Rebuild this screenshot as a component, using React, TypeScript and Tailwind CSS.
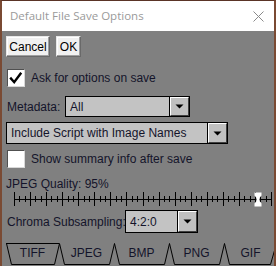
import React from "react";

const body = { fontFamily: '"Liberation Sans", Arial, sans-serif' };

function DropBtn() {
  return (
    <div className="flex h-full w-[20px] shrink-0 items-center justify-center border-l border-black">
      <div className="flex h-full w-full items-center justify-center border-t border-l border-t-white border-l-white border-b border-r border-b-[#404040] border-r-[#404040] bg-[#c0c0c0]">
        <svg width="9" height="5" viewBox="0 0 9 5">
          <path d="M0.5 0.5H8.5L4.5 4.5Z" fill="#000" />
        </svg>
      </div>
    </div>
  );
}

function CheckBox({ checked }: { checked: boolean }) {
  return (
    <div className="flex h-[18px] w-[18px] shrink-0 items-center justify-center border-t border-l border-t-[#505050] border-l-[#505050] border-b border-r border-b-[#d8d8d8] border-r-[#d8d8d8] bg-white">
      {checked && (
        <svg width="16" height="16" viewBox="0 0 16 16">
          <path d="M3 8.5 L6.2 12.2 L12.5 3.8" fill="none" stroke="#000" strokeWidth="2.4" strokeLinecap="square" />
        </svg>
      )}
    </div>
  );
}

function Btn({ label, className }: { label: string; className: string }) {
  return (
    <div
      className={
        "flex h-[21px] shrink-0 items-center justify-center whitespace-nowrap border-t border-l border-t-[#e8e8e8] border-l-[#e8e8e8] border-b border-r border-b-[#696969] border-r-[#696969] bg-[#f0f0f0] text-[12px] text-black shadow-[inset_-1px_-1px_#a0a0a0,inset_1px_1px_#ffffff] " +
        className
      }
    >
      {label}
    </div>
  );
}

function Slider() {
  const ticks: React.ReactNode[] = [];
  const x0 = 8;
  const span = 257;
  for (let i = 0; i <= 48; i++) {
    const x = Math.round(x0 + (i * span) / 48) + 0.5;
    const long = i % 3 === 0;
    ticks.push(
      <line key={i} x1={x} x2={x} y1={long ? 1 : 5} y2={long ? 15 : 11} stroke="#000" strokeWidth="1" />
    );
  }
  const tx = Math.round(x0 + 0.95 * span);
  return (
    <svg width="272" height="18" viewBox="0 0 272 18" className="block">
      <line x1={x0} x2={x0 + span + 1} y1="8.5" y2="8.5" stroke="#000" strokeWidth="1" />
      {ticks}
      <path
        d={`M${tx - 3.5} 1.5 H${tx + 3.5} V4.5 L${tx + 1.5} 7 V10 L${tx + 3.5} 12.5 V15.5 H${tx - 3.5} V12.5 L${tx - 1.5} 10 V7 L${tx - 3.5} 4.5 Z`}
        fill="#fff"
      />
    </svg>
  );
}

function Tabs() {
  const names = ["TIFF", "JPEG", "BMP", "PNG", "GIF"];
  const widths = ["w-[53px]", "w-[55px]", "w-[55px]", "w-[55px]", "w-[53px]"];
  return (
    <div className="relative mt-[10px] flex h-[22px]">
      <svg width="272" height="23" viewBox="0 0 272 23" className="absolute left-0 top-0" fill="none" stroke="#000" strokeWidth="1">
        <path d="M0 0.5 H53" />
        <path d="M0.5 0.5 L5.5 21.5 H48.5 L53.5 0.5" />
        <path d="M53.5 0.5 L58.5 21.5 H103.5 L108.5 0.5" />
        <path d="M108.5 0.5 L113.5 21.5 H158.5 L163.5 0.5" />
        <path d="M163.5 0.5 L168.5 21.5 H213.5 L218.5 0.5" />
        <path d="M218.5 0.5 L223.5 21.5 H264.5 L270.5 0.5" />
      </svg>
      {names.map((n, i) => (
        <div key={n} className={"relative flex h-[20px] shrink-0 items-center justify-center whitespace-nowrap text-[12px] text-[#14142a] " + widths[i]}>
          {n}
        </div>
      ))}
    </div>
  );
}

export default function App() {
  return (
    <div className="flex h-[266px] w-[276px] flex-col overflow-hidden border-t border-l-2 border-r-2 border-t-[#5a3426] border-l-[#7a4a33] border-r-[#7a4a33] bg-[#808080]" style={body}>
      <div className="flex h-[30px] shrink-0 items-center justify-between bg-white pl-[8px] pr-[10px]">
        <span className="whitespace-nowrap text-[11.5px] text-[#9a9a9a]" style={{ fontFamily: '"Open Sans", "Noto Sans", sans-serif' }}>
          Default File Save Options
        </span>
        <svg width="11" height="11" viewBox="0 0 11 11">
          <path d="M0.5 0.5 L10.5 10.5 M10.5 0.5 L0.5 10.5" stroke="#8a8a8a" strokeWidth="1" />
        </svg>
      </div>
      <div className="flex flex-1 flex-col whitespace-nowrap pl-[4px] text-[12px] text-[#14142a]">
        <div className="mt-[5px] flex gap-[6px]">
          <Btn label="Cancel" className="w-[44px]" />
          <Btn label="OK" className="w-[25px]" />
        </div>
        <div className="mt-[12px] flex h-[18px] items-center gap-[6px] pl-[1px]">
          <CheckBox checked />
          <span>Ask for options on save</span>
        </div>
        <div className="mt-[9px] flex h-[21px] items-center pl-[1px]">
          <span className="w-[58px] shrink-0">Metadata:</span>
          <div className="flex h-[21px] w-[125px] shrink-0 border border-black bg-[#c3c3c3]">
            <span className="flex flex-1 items-center pl-[4px]">All</span>
            <DropBtn />
          </div>
        </div>
        <div className="mt-[5px] flex h-[22px] w-[222px] border border-black bg-[#c3c3c3]">
          <span className="flex flex-1 items-center pl-[4px]">Include Script with Image Names</span>
          <DropBtn />
        </div>
        <div className="mt-[6px] flex h-[18px] items-center gap-[6px] pl-[1px]">
          <CheckBox checked={false} />
          <span>Show summary info after save</span>
        </div>
        <div className="mt-[9px] flex h-[14px] items-center">JPEG Quality: 95%</div>
        <div>
          <Slider />
        </div>
        <div className="mt-[1px] flex h-[23px] items-center pl-[1px]">
          <span className="w-[118px] shrink-0">Chroma Subsampling:</span>
          <div className="flex h-[23px] w-[73px] shrink-0 border border-black bg-[#c3c3c3]">
            <span className="flex flex-1 items-center pl-[4px]">4:2:0</span>
            <DropBtn />
          </div>
        </div>
        <Tabs />
      </div>
    </div>
  );
}
